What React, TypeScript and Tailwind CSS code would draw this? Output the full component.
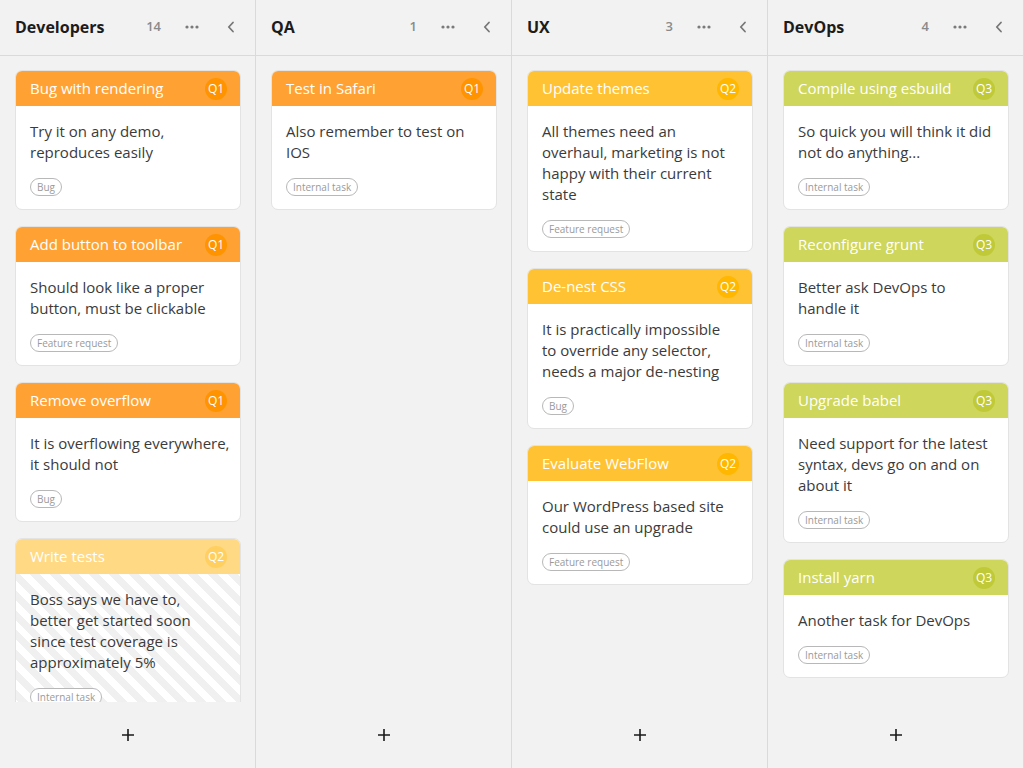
import React from "react";

type Tone = "orange" | "yellow" | "green" | "faded";

interface Task {
  title: string;
  prio: string;
  tone: Tone;
  lines: string[];
  tag: string;
}

interface Lane {
  name: string;
  count: number;
  tasks: Task[];
}

const HEAD: Record<Tone, string> = {
  orange: "bg-[#FFA233]",
  yellow: "bg-[#FFC233]",
  green: "bg-[#CED65B]",
  faded: "bg-[#FFD983]",
};

const BADGE: Record<Tone, string> = {
  orange: "bg-[#FF9300]",
  yellow: "bg-[#FFB700]",
  green: "bg-[#C0CA38]",
  faded: "bg-[#FFCF60]",
};

const lanes: Lane[] = [
  {
    name: "Developers",
    count: 14,
    tasks: [
      { title: "Bug with rendering", prio: "Q1", tone: "orange", lines: ["Try it on any demo,", "reproduces easily"], tag: "Bug" },
      { title: "Add button to toolbar", prio: "Q1", tone: "orange", lines: ["Should look like a proper", "button, must be clickable"], tag: "Feature request" },
      { title: "Remove overflow", prio: "Q1", tone: "orange", lines: ["It is overflowing everywhere,", "it should not"], tag: "Bug" },
      {
        title: "Write tests",
        prio: "Q2",
        tone: "faded",
        lines: ["Boss says we have to,", "better get started soon", "since test coverage is", "approximately 5%"],
        tag: "Internal task",
      },
    ],
  },
  {
    name: "QA",
    count: 1,
    tasks: [{ title: "Test in Safari", prio: "Q1", tone: "orange", lines: ["Also remember to test on", "IOS"], tag: "Internal task" }],
  },
  {
    name: "UX",
    count: 3,
    tasks: [
      {
        title: "Update themes",
        prio: "Q2",
        tone: "yellow",
        lines: ["All themes need an", "overhaul, marketing is not", "happy with their current", "state"],
        tag: "Feature request",
      },
      { title: "De-nest CSS", prio: "Q2", tone: "yellow", lines: ["It is practically impossible", "to override any selector,", "needs a major de-nesting"], tag: "Bug" },
      { title: "Evaluate WebFlow", prio: "Q2", tone: "yellow", lines: ["Our WordPress based site", "could use an upgrade"], tag: "Feature request" },
    ],
  },
  {
    name: "DevOps",
    count: 4,
    tasks: [
      { title: "Compile using esbuild", prio: "Q3", tone: "green", lines: ["So quick you will think it did", "not do anything..."], tag: "Internal task" },
      { title: "Reconfigure grunt", prio: "Q3", tone: "green", lines: ["Better ask DevOps to", "handle it"], tag: "Internal task" },
      { title: "Upgrade babel", prio: "Q3", tone: "green", lines: ["Need support for the latest", "syntax, devs go on and on", "about it"], tag: "Internal task" },
      { title: "Install yarn", prio: "Q3", tone: "green", lines: ["Another task for DevOps"], tag: "Internal task" },
    ],
  },
];

const TaskCard = ({ task }: { task: Task }) => {
  const faded = task.tone === "faded";
  return (
    <div className="w-[226px] shrink-0 overflow-hidden rounded-[7px] border border-[#e3e3e3] bg-white">
      <div className={`flex h-[35px] items-center justify-between pl-[14px] pr-[13px] ${HEAD[task.tone]}`}>
        <span className="whitespace-nowrap text-[15px] text-white">{task.title}</span>
        <span className={`grid h-[22px] w-[22px] place-items-center rounded-full text-[12px] text-white ${BADGE[task.tone]}`}>{task.prio}</span>
      </div>
      <div
        className={`px-[14px] pb-[13px] pt-[15px] ${
          faded ? "bg-[repeating-linear-gradient(45deg,#f0f0f0_0px,#f0f0f0_7px,#ffffff_7px,#ffffff_14px)]" : ""
        }`}
      >
        <div className="text-[15px] leading-[21px] text-[#3b3b3b]">
          {task.lines.map((l) => (
            <div key={l} className="whitespace-nowrap">{l}</div>
          ))}
        </div>
        <div className="mt-[15px] flex h-[18px] w-fit items-center rounded-full border border-[#b8b8b8] bg-white px-[6px] text-[10px] leading-none text-[#9a9a9a]">
          {task.tag}
        </div>
      </div>
    </div>
  );
};

const Column = ({ lane }: { lane: Lane }) => (
  <div className="flex h-full w-[256px] shrink-0 flex-col border-r border-[#dadada]">
    <div className="flex h-[56px] shrink-0 items-center border-b border-[#dadada] pb-[1px] pl-[15px] pr-[8px]">
      <span className="flex-1 text-[16px] font-bold text-[#1c1c1c]">{lane.name}</span>
      <span className="text-[13px] font-semibold text-[#8a8a8a]">{lane.count}</span>
      <button className="ml-[15px] grid h-8 w-8 place-items-center text-[#7a7a7a]">
        <svg width="14" height="4" viewBox="0 0 14 4" fill="currentColor" aria-hidden>
          <circle cx="2" cy="2" r="1.6" />
          <circle cx="7" cy="2" r="1.6" />
          <circle cx="12" cy="2" r="1.6" />
        </svg>
      </button>
      <button className="ml-[7px] grid h-8 w-8 place-items-center text-[#777]">
        <svg width="8" height="12" viewBox="0 0 8 12" fill="none" stroke="currentColor" strokeWidth={1.8} strokeLinecap="round" strokeLinejoin="round" aria-hidden>
          <path d="M6 1.5 1.8 6 6 10.5" />
        </svg>
      </button>
    </div>
    <div className="flex min-h-0 flex-1 flex-col gap-4 overflow-hidden pl-[15px] pt-[14px]">
      {lane.tasks.map((t) => (
        <TaskCard key={t.title} task={t} />
      ))}
    </div>
    <div className="grid h-[66px] shrink-0 place-items-center text-[#1a1a1a]">
      <svg width="12" height="12" viewBox="0 0 12 12" fill="none" stroke="currentColor" strokeWidth={1.6} aria-hidden>
        <path d="M6 0v12M0 6h12" />
      </svg>
    </div>
  </div>
);

export default function App() {
  return (
    <div className="flex h-[768px] w-[1024px] overflow-hidden bg-[#f2f2f2] font-['Open_Sans',sans-serif]">
      {lanes.map((l) => (
        <Column key={l.name} lane={l} />
      ))}
    </div>
  );
}
